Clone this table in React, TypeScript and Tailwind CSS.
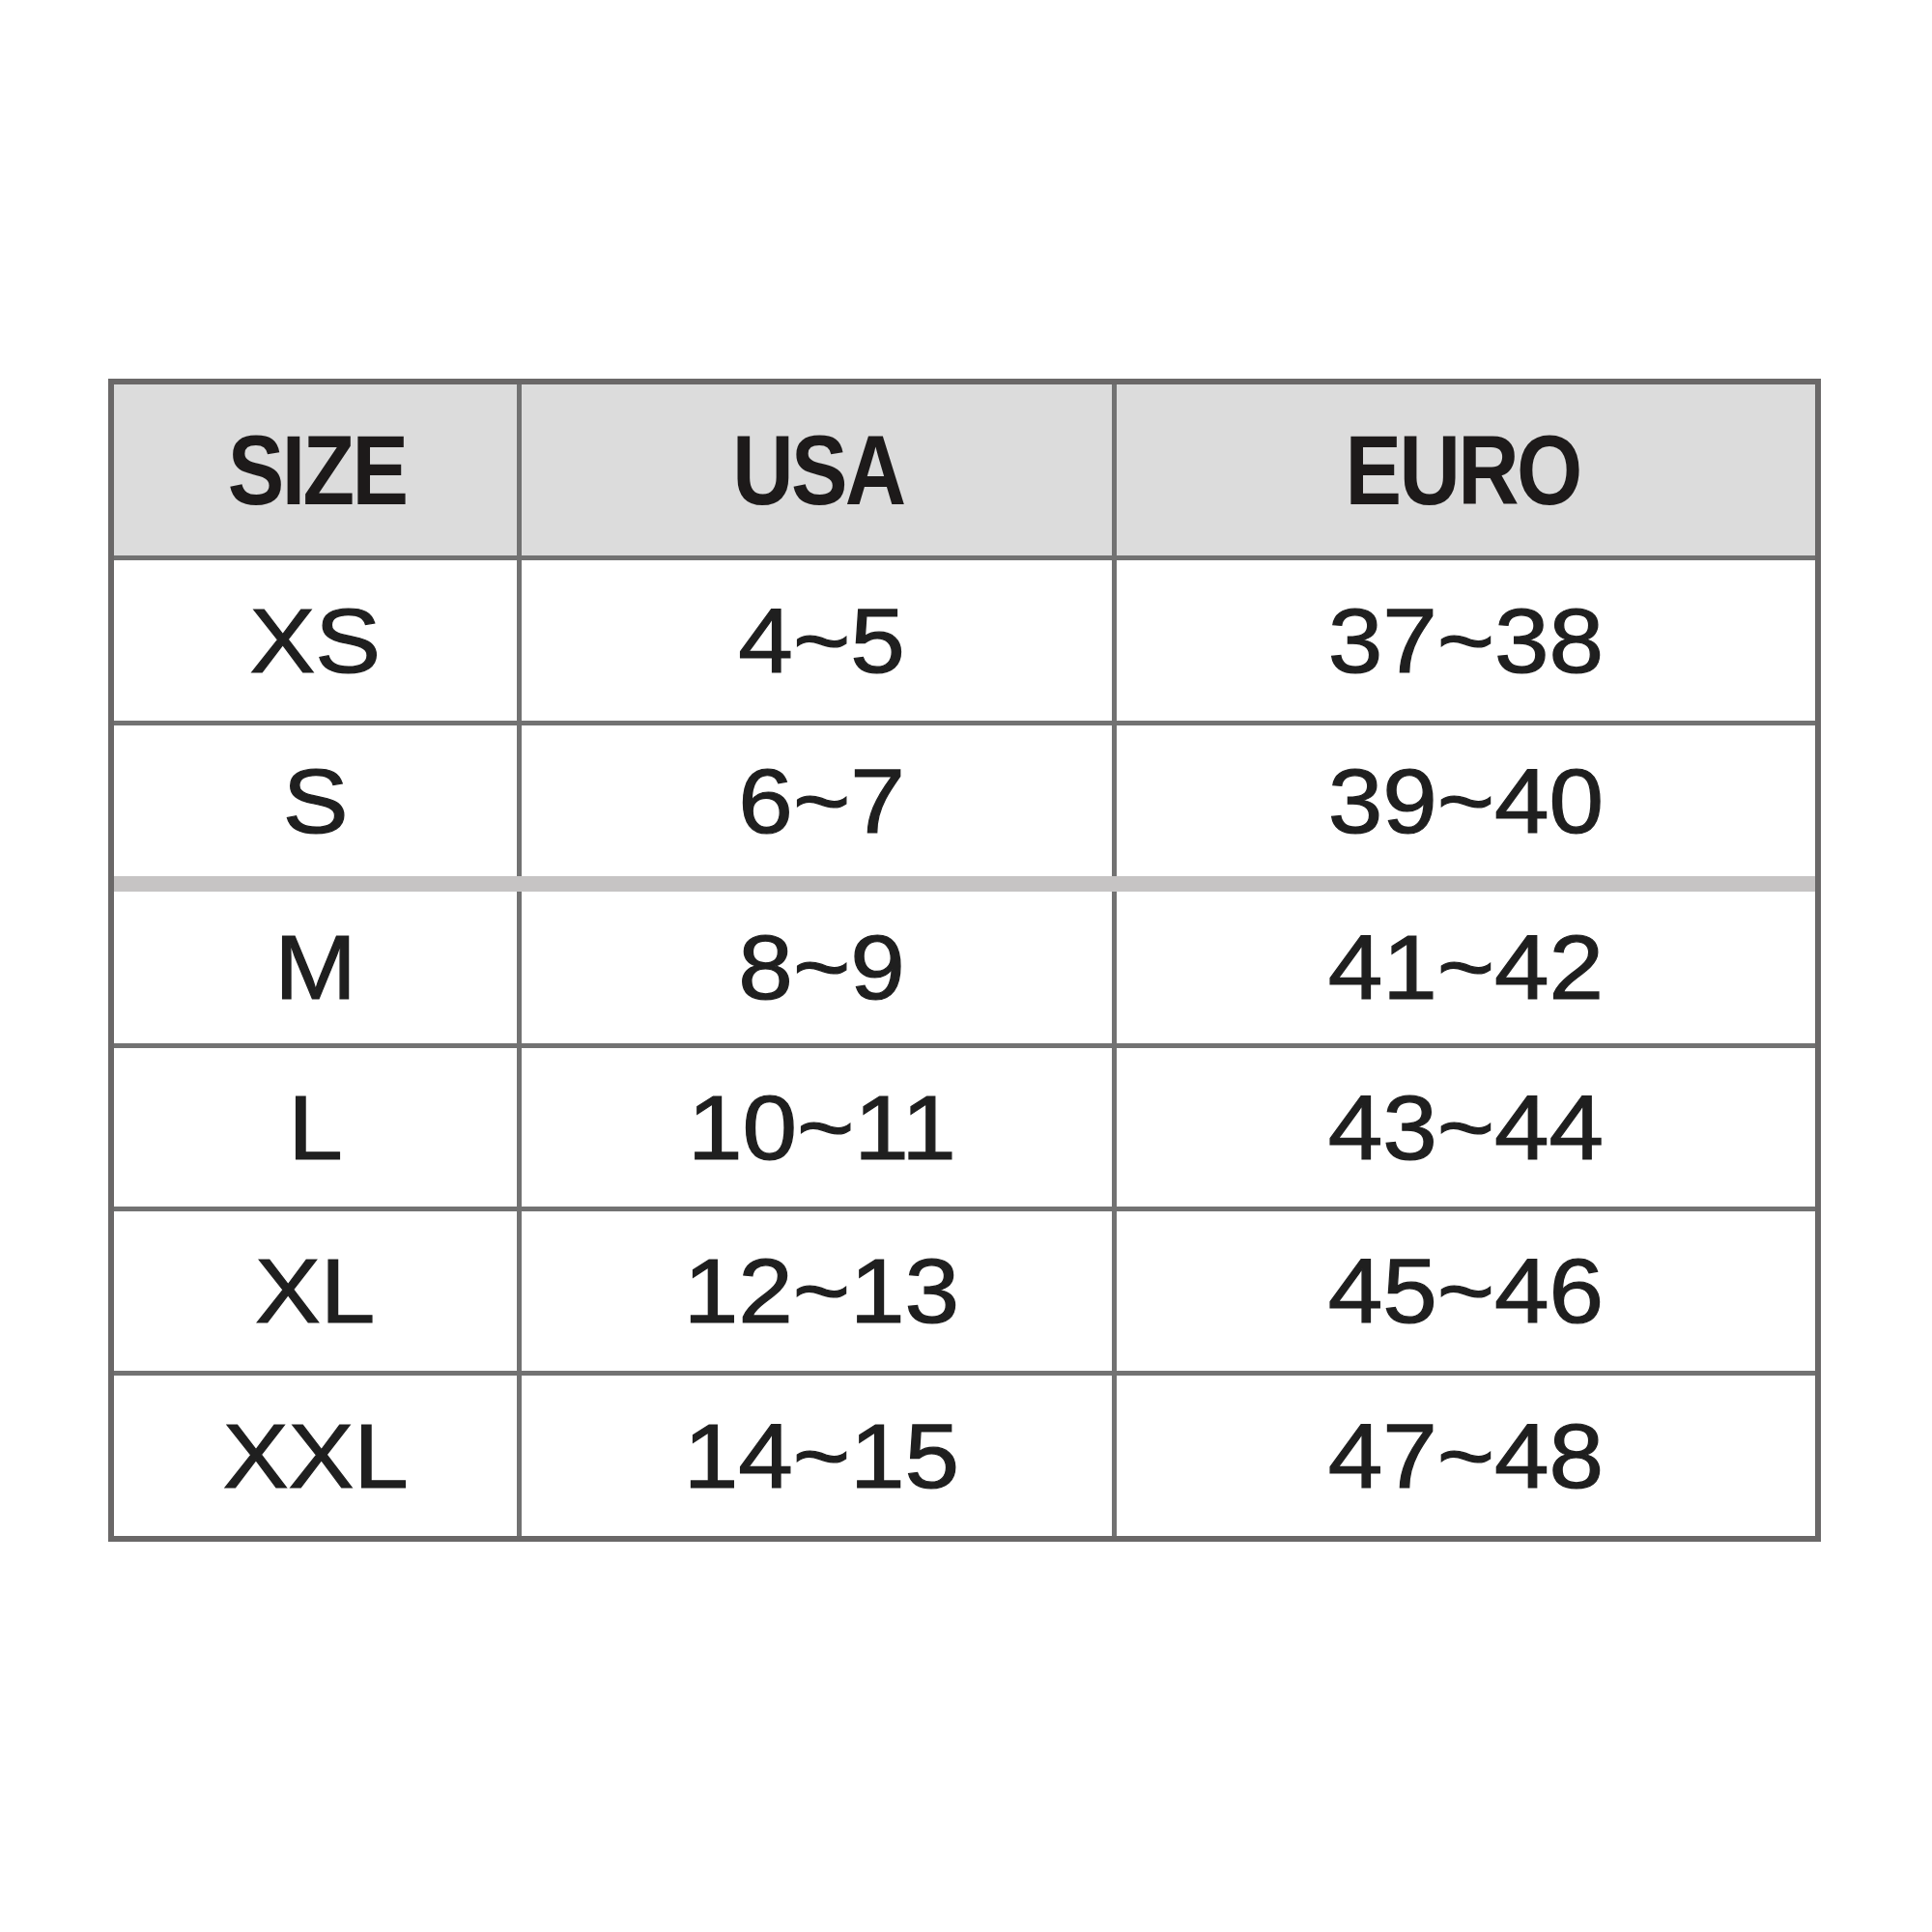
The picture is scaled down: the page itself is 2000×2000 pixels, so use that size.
import React from "react";

const rows: { cells: [string, string, string]; h: string; border: string }[] = [
  { cells: ["XS", "4~5", "37~38"], h: "h-[166px]", border: "border-b-[5px] border-b-[#727272]" },
  { cells: ["S", "6~7", "39~40"], h: "h-[156px]", border: "border-b-[16px] border-b-[#c6c4c4]" },
  { cells: ["M", "8~9", "41~42"], h: "h-[157px]", border: "border-b-[5px] border-b-[#727272]" },
  { cells: ["L", "10~11", "43~44"], h: "h-[164px]", border: "border-b-[5px] border-b-[#727272]" },
  { cells: ["XL", "12~13", "45~46"], h: "h-[165px]", border: "border-b-[5px] border-b-[#727272]" },
  { cells: ["XXL", "14~15", "47~48"], h: "h-[166px]", border: "" },
];

export default function App() {
  return (
    <div
      className="w-[2000px] h-[2000px] bg-white pt-[392px] pl-[112px]"
      style={{ fontFamily: '"Liberation Sans", Arial, sans-serif' }}
    >
      <div className="w-[1773px] border-[6px] border-[#6a6868] flex flex-col">
        <div className="grid grid-cols-[422px_616px_713px] h-[182px] bg-[#dcdcdc] border-b-[5px] border-b-[#727272]">
          {["SIZE", "USA", "EURO"].map((t, i) => (
            <div
              key={t}
              className={`flex items-center justify-center ${
                i < 2 ? "border-r-[5px] border-r-[#727272]" : ""
              }`}
            >
              <span className="inline-block scale-x-[0.86] text-[102px] leading-none font-bold tracking-[-0.03em] text-[#1d1a1a] pl-[0.03em]">
                {t}
              </span>
            </div>
          ))}
        </div>
        {rows.map((r) => (
          <div key={r.cells[0]} className={`grid grid-cols-[422px_616px_713px] ${r.border}`}>
            {r.cells.map((c, i) => (
              <div
                key={i}
                className={`${r.h} flex items-center justify-center ${
                  i < 2 ? "border-r-[5px] border-r-[#727272]" : ""
                } ${i > 0 ? "pl-[10px]" : ""}`}
              >
                <span className="inline-block scale-x-[1.07] text-[95px] leading-none text-[#1f1f1f] [-webkit-text-stroke:1.2px_#1f1f1f]">
                  {c}
                </span>
              </div>
            ))}
          </div>
        ))}
      </div>
    </div>
  );
}
